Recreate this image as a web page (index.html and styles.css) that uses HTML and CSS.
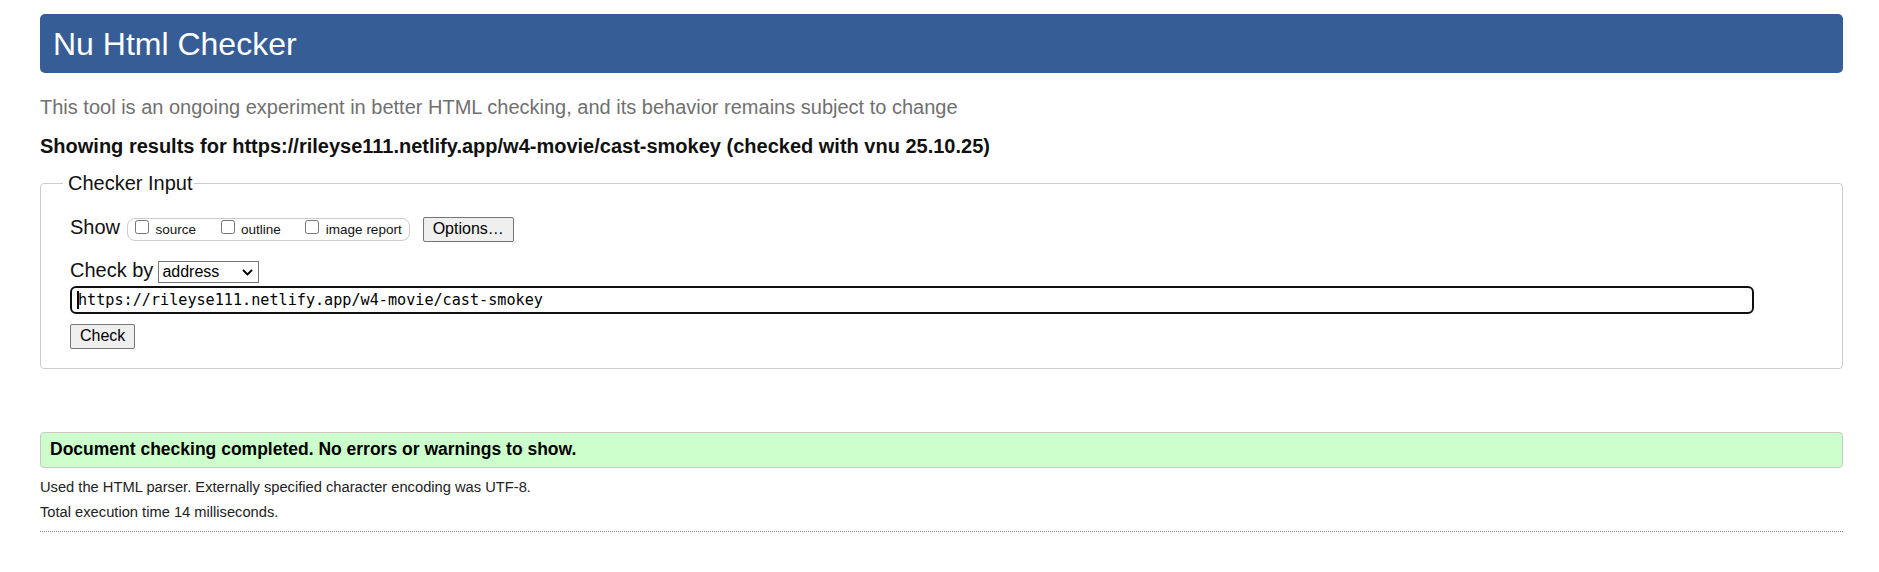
FILE: index.html
```html
<!DOCTYPE html>
<html lang="en">
<head>
<meta charset="utf-8">
<title>Showing results for https://rileyse111.netlify.app/w4-movie/cast-smokey - Nu Html Checker</title>
<link rel="stylesheet" href="styles.css">
</head>
<body>
<h1 class="title">Nu Html Checker</h1>
<p class="intro">This tool is an ongoing experiment in better HTML checking, and its behavior remains subject to change</p>
<h2 class="results-for">Showing results for https://rileyse111.netlify.app/w4-movie/cast-smokey (checked with vnu 25.10.25)</h2>
<form class="checker">
  <fieldset class="checker-input">
    <legend class="legend">Checker Input</legend>
    <div class="row row-show">
      <span class="row-label">Show</span>
      <span class="opts"><label class="opt"><input type="checkbox" class="cb">source</label><label class="opt"><input type="checkbox" class="cb">outline</label><label class="opt"><input type="checkbox" class="cb">image report</label></span>
      <button type="button" class="btn btn-options">Options…</button>
    </div>
    <div class="row row-by">
      <span class="row-label">Check by</span>
      <span class="select-wrap">
        <select class="select"><option>address</option></select>
        <svg class="chev" width="11" height="7" viewBox="0 0 11 7" aria-hidden="true"><polyline points="1,1 5.5,5.5 10,1" fill="none" stroke="#000" stroke-width="1.8"/></svg>
      </span>
    </div>
    <div class="url-wrap">
      <input class="url" type="url" value="https://rileyse111.netlify.app/w4-movie/cast-smokey">
      <span class="caret"></span>
    </div>
    <div class="row-check">
      <button type="button" class="btn">Check</button>
    </div>
  </fieldset>
</form>
<p class="result-ok">Document checking completed. No errors or warnings to show.</p>
<p class="info first">Used the HTML parser. Externally specified character encoding was UTF-8.</p>
<p class="info">Total execution time 14 milliseconds.</p>
<div class="sep"></div>
</body>
</html>
```

FILE: styles.css
```css
* { box-sizing: border-box; }
html, body { margin: 0; }
body {
  padding: 14px 36px 40px 40px;
  font-family: "Liberation Sans", Arial, sans-serif;
  color: #111;
  background: #fff;
}
.title {
  margin: 0;
  padding: 12px 13px 10px;
  font-size: 32px;
  line-height: 37px;
  font-weight: normal;
  color: #fff;
  background: #365d95;
  border-radius: 5px;
}
.intro {
  margin: 23px 0 0;
  font-size: 20px;
  line-height: 23px;
  color: #707070;
}
.results-for {
  margin: 16px 0 0;
  font-size: 20px;
  line-height: 23px;
  font-weight: bold;
  color: #111;
}
.checker { margin: 14px 0 0; }
.checker-input {
  margin: 0;
  min-width: 0;
  padding: 21px 29px 19px;
  border: 1px solid #cccccc;
  border-radius: 4px;
}
.legend {
  margin-left: -7px;
  padding: 0 1px 0 5px;
  font-size: 20px;
  line-height: 23px;
  color: #111;
}
.row { display: flex; align-items: baseline; }
.row-label { font-size: 20px; line-height: 23px; color: #111; }
.row-show .row-label { margin-right: 7px; }
.opts {
  display: block;
  padding: 0 7px;
  border: 1px solid #cccccc;
  border-radius: 8px;
  font-size: 13.5px;
  line-height: 21px;
  white-space: nowrap;
  color: #111;
}
.opt + .opt { margin-left: 24.5px; }
.cb {
  width: 14px;
  height: 14px;
  margin: 0 6.5px 1px 0;
  vertical-align: baseline;
}
.btn {
  font-family: "Liberation Sans", Arial, sans-serif;
  font-size: 16px;
  line-height: 18px;
  padding: 2px 9px 3px;
  color: #000;
  background: #efefef;
  border: 1px solid #767676;
  border-radius: 2px;
}
.btn-options { margin-left: 13px; }
.row-by { margin-top: 17px; }
.row-by .row-label { margin-right: 5px; }
.select-wrap { display: flex; position: relative; }
.select {
  -webkit-appearance: none;
  appearance: none;
  width: 101px;
  height: 22px;
  padding: 0 0 0 3px;
  font-family: "Liberation Sans", Arial, sans-serif;
  font-size: 16px;
  color: #000;
  background: #fff;
  border: 1px solid #767676;
  border-radius: 0;
}
.chev { position: absolute; right: 6px; top: 8px; pointer-events: none; }
.url-wrap { position: relative; margin-top: 3px; width: 1684px; }
.url {
  display: block;
  width: 100%;
  height: 28px;
  padding: 0 0 0 6px;
  font-family: "DejaVu Sans Mono", monospace;
  font-size: 15.15px;
  color: #000;
  background: #fff;
  border: 2px solid #101010;
  border-radius: 6px;
  outline: none;
}
.caret { position: absolute; left: 7px; top: 5px; width: 2px; height: 18px; background: #000; }
.row-check { display: flex; margin-top: 10px; }
.result-ok {
  margin: 63px 0 0;
  padding: 6px 9px 8px;
  font-size: 17.5px;
  line-height: 20px;
  font-weight: bold;
  color: #000;
  background: #ccffcc;
  border: 1px solid #c8c8c8;
  border-radius: 4px;
}
.info { margin: 0; font-size: 14.7px; line-height: 25.5px; color: #222; }
.info.first { margin-top: 7px; }
.sep { margin-top: 5px; border-top: 1px dotted #888; }
```
